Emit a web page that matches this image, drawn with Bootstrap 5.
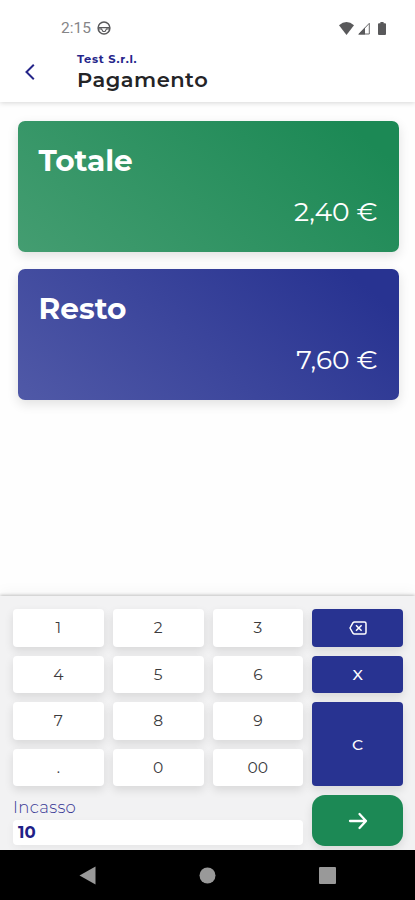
<!DOCTYPE html>
<html lang="it">
<head>
<meta charset="utf-8">
<meta name="viewport" content="width=device-width, initial-scale=1">
<title>Pagamento</title>
<link href="https://cdn.jsdelivr.net/npm/bootstrap@5.3.0/dist/css/bootstrap.min.css" rel="stylesheet">
<style>
  body { font-family: Montserrat, Inter, "Open Sans", sans-serif; color: #242426; background: #fefefe; }
  .screen { height: 900px; width: 415px; }
  .status-bar { height: 45px; padding: 11px 29px 0 61px; color: #59595b; }
  .clock { font: 15.5px/1 Roboto, sans-serif; padding-top: 1px; margin-right: 6px; color: #858587; }
  .app-head { height: 102px; background: #fff; box-shadow: 0 1px 5px rgba(0,0,0,.16); }
  .head-row { height: 54px; padding-left: 24px; }
  .shop { font-size: 11.5px; line-height: 14px; letter-spacing: .65px; color: #26268b; padding-top: 1px; }
  .page-title { font-size: 21px; line-height: 27px; letter-spacing: .5px; font-weight: 600; }
  .amounts { padding: 18.5px 16.5px 0 17.5px; gap: 17px; }
  .amount-card { height: 131px; border-radius: 7px; padding: 21px 21px 24px; color: #fff; box-shadow: 0 4px 12px rgba(0,0,0,.12); }
  .total-card { background: linear-gradient(40deg, #449d71, #1c8955 90%); }
  .change-card { background: linear-gradient(40deg, #5059a7, #283391 90%); }
  .amount-label { font-size: 29.6px; line-height: 36px; font-weight: 700; }
  .amount-value { font-size: 26.5px; line-height: 33px; font-weight: 400; }
  .pad { height: 254px; background: #f2f2f3; padding: 13px 12px 0 13px; box-shadow: 0 -1px 3px rgba(0,0,0,.22), 0 -4px 14px rgba(0,0,0,.04); }
  .keys { display: grid; grid-template-columns: repeat(4, 1fr); grid-template-rows: repeat(4, 37.6px) 50.5px; gap: 9px; }
  .key { border: 0; border-radius: 4px; padding: 0; background: #fff; color: #3b3b3d; font-size: 15.5px; line-height: 1; box-shadow: 0 4px 10px rgba(0,0,0,.11); }
  .key-blue { background: #283391; color: #fff; font-weight: 500; }
  .key-tall { grid-row: span 2; }
  .key-go { background: #1c8955; border-radius: 13px; }
  .cash { grid-column: span 3; }
  .cash-label { font-size: 16.5px; line-height: 25px; letter-spacing: .35px; font-weight: 300; color: #383895; }
  .cash-value { height: 25px; border-radius: 4px; background: #fff; padding: 0 5px; font-size: 16.5px; line-height: 25px; color: #202087; box-shadow: 0 3px 8px rgba(0,0,0,.05); }
  .sys-nav { height: 50px; background: #000; padding: 0 79px; }
  svg { display: block; }
</style>
<script src="https://cdn.jsdelivr.net/npm/bootstrap@5.3.0/dist/js/bootstrap.bundle.min.js"></script>
</head>
<body>
<div class="screen d-flex flex-column overflow-hidden">
  <header class="app-head flex-shrink-0">
    <div class="status-bar d-flex align-items-center">
      <span class="clock">2:15</span>
      <svg width="14" height="14" viewBox="0 0 14 14" fill="none" stroke="currentColor"><circle cx="7" cy="7" r="5.9" stroke-width="1.5"/><path d="M1.500 6.600h11M1.500 8h3l1.500 2.500h2L9.500 8h3" stroke-width="1.2"/></svg>
      <svg class="ms-auto" width="15" height="13" viewBox="0 0 15 13"><path d="M0 3.200Q7.500-3 15 3.200L7.500 13Z" fill="currentColor"/></svg>
      <svg class="ms-1" width="12" height="13" viewBox="0 0 12 13"><path d="M0 12.500 7 5.500v7Z" fill="currentColor"/><path d="M1 12 11.300 1.300V12Z" fill="none" stroke="currentColor" stroke-width=".9"/></svg>
      <svg class="ms-2" width="8" height="13" viewBox="0 0 8 13"><path d="M2.400 0h3.200v1.200H7q1 0 1 1V12q0 1-1 1H1q-1 0-1-1V2.200q0-1 1-1h1.400Z" fill="currentColor"/></svg>
    </div>
    <div class="head-row d-flex align-items-center">
      <svg width="12" height="18" viewBox="0 0 12 18" fill="none" stroke="#252589" stroke-width="2"><path d="M9.800 1.800 2.500 9l7.300 7.200"/></svg>
      <div style="margin-left:41px">
        <div class="shop fw-bold">Test S.r.l.</div>
        <div class="page-title">Pagamento</div>
      </div>
    </div>
  </header>

  <main class="amounts d-flex flex-column flex-grow-1">
    <section class="amount-card total-card d-flex flex-column justify-content-between">
      <div class="amount-label">Totale</div>
      <div class="amount-value text-end">2,40 €</div>
    </section>
    <section class="amount-card change-card d-flex flex-column justify-content-between">
      <div class="amount-label">Resto</div>
      <div class="amount-value text-end">7,60 €</div>
    </section>
  </main>

  <section class="pad flex-shrink-0">
    <div class="keys">
      <button class="key">1</button><button class="key">2</button><button class="key">3</button>
      <button class="key key-blue d-flex align-items-center justify-content-center" aria-label="Backspace">
        <svg width="18" height="14" viewBox="0 0 18 14" fill="none" stroke="currentColor" stroke-width="1.5" stroke-linejoin="round"><path d="M5.400 1H15.500Q17 1 17 2.500v9Q17 13 15.500 13H5.400Q4.600 13 4 12.300L1 7 4 1.700Q4.600 1 5.400 1Z"/><path d="m7 4.200 5.600 5.600M12.600 4.200 7 9.800"/></svg>
      </button>
      <button class="key">4</button><button class="key">5</button><button class="key">6</button>
      <button class="key key-blue">X</button>
      <button class="key">7</button><button class="key">8</button><button class="key">9</button>
      <button class="key key-blue key-tall">C</button>
      <button class="key">.</button><button class="key">0</button><button class="key">00</button>
      <div class="cash">
        <div class="cash-label">Incasso</div>
        <div class="cash-value fw-bold">10</div>
      </div>
      <button class="key key-go d-flex align-items-center justify-content-center" aria-label="Avanti">
        <svg width="20" height="18" viewBox="0 0 20 18" fill="none" stroke="#fff" stroke-width="2.3" stroke-linecap="round" stroke-linejoin="round"><path d="M2 9h16M11.500 2l6.500 7-6.500 7"/></svg>
      </button>
    </div>
  </section>

  <nav class="sys-nav flex-shrink-0 d-flex align-items-center justify-content-between">
    <svg width="17" height="19" viewBox="0 0 17 19"><path d="M.5 9.500 16.500 .500v18Z" fill="#999"/></svg>
    <svg width="17" height="17" viewBox="0 0 17 17"><circle cx="8.500" cy="8.500" r="8" fill="#999"/></svg>
    <svg width="17" height="17" viewBox="0 0 17 17"><rect width="17" height="17" rx="1" fill="#999"/></svg>
  </nav>
</div>
</body>
</html>
